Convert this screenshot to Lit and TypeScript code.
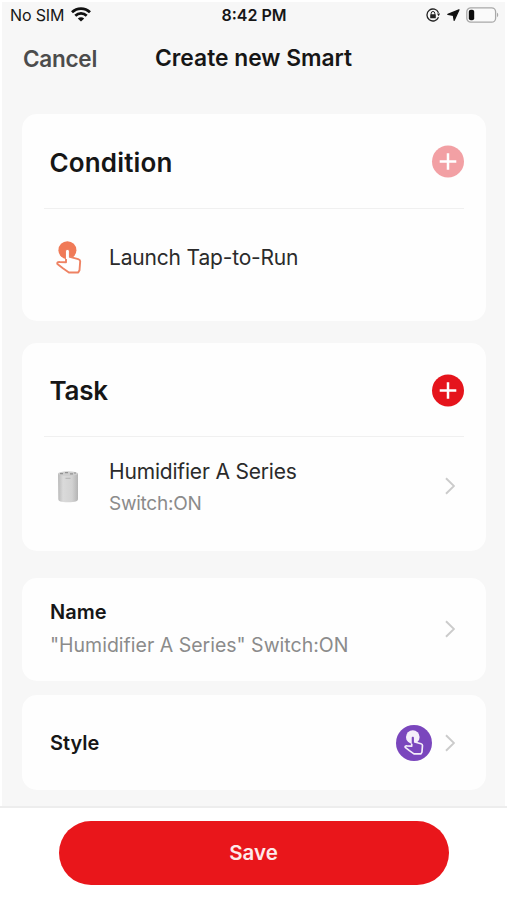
import { LitElement, html, css } from "lit";
import { customElement, property } from "lit/decorators.js";

@customElement("touch-icon")
class TouchIcon extends LitElement {
  @property() dot = "#f07a57";
  @property() line = "#ee8263";
  @property() fill = "#ffffff";
  @property() weight = "1.9";
  static styles = css`
    :host { display: block; }
    svg { display: block; width: 100%; height: 100%; }
  `;
  render() {
    return html`<svg viewBox="0 0 26 33">
      <circle cx="11.4" cy="9.2" r="9" fill=${this.dot} />
      <path
        d="M10 21.3V10.2c0-1.9 2.900-1.900 2.900 0v5.400l9.300 2.500c1.300.4 2 1.100 2 2.200l-.7 8.900-1.300 2.300h-9.300l-6-4.200L1.400 22.900c-.5-1.500.7-2.100 2.200-1.900z"
        fill=${this.fill} stroke=${this.line} stroke-width=${this.weight} stroke-linejoin="round" />
      <path d="M10 18V10.300c0-1.900 2.900-1.900 2.900 0V18z" fill=${this.fill} />
    </svg>`;
  }
}

@customElement("app-root")
class AppRoot extends LitElement {
  static styles = css`
    :host {
      display: block;
      width: 507px;
      height: 900px;
      overflow: hidden;
      background: #fff;
      color: #161616;
      font-family: Inter, "Liberation Sans", sans-serif;
      white-space: nowrap;
    }
    * { box-sizing: border-box; }
    svg { display: block; flex: none; }
    .screen { height: 808px; padding: 2px 2px 0; overflow: hidden; border-bottom: 2px solid #ededed; }
    .page { height: 804px; background: #f7f7f7; padding: 0 19px 0 20px; }
    .status {
      display: grid;
      grid-template-columns: 1fr auto 1fr;
      align-items: center;
      height: 26px;
      margin: 0 -13px 0 -12px;
      font-size: 16px;
    }
    .carrier { display: flex; align-items: center; gap: 7px; margin-top: -1px; letter-spacing: -0.15px; }
    .time { font-weight: 600; padding: 0 1px 1px 0; }
    .indicators { display: flex; justify-content: flex-end; align-items: center; gap: 7px; margin-top: -1px; }
    .battery { margin-left: -1px; }
    .nav { display: flex; align-items: center; height: 60px; margin-bottom: 26px; font-weight: 600; }
    .cancel { width: 133px; padding-left: 1px; font-size: 22.500px; letter-spacing: -0.25px; color: #4c4c4c; }
    .title { padding-bottom: 2px; font-size: 22.800px; }
    .card { background: #fefefe; border-radius: 15px; padding: 0 22px; }
    .condition { height: 207px; margin-bottom: 22px; }
    .task { height: 208px; margin-bottom: 27px; }
    .head {
      display: flex;
      align-items: center;
      justify-content: space-between;
      height: 95px;
      padding: 1px 0 0 6px;
      border-bottom: 1.500px solid #f0f0f0;
      font-size: 26px;
      font-weight: 600;
    }
    .head span { padding-top: 2px; margin-left: -0.5px; letter-spacing: 0.15px; }
    .task .head { height: 94px; }
    .task .head span { padding-top: 0; letter-spacing: -0.25px; }
    .item { display: flex; align-items: center; height: 98px; padding-left: 12px; }
    .tap { width: 26px; height: 33px; margin: -2px 27px 0 0; }
    .device { margin: 2px 29px 0 1px; }
    .grow { flex: 1; }
    .label { font-size: 21px; line-height: 32px; letter-spacing: -0.18px; color: #2b2b2b; }
    .item .grow { padding-top: 4px; }
    .sub { font-size: 19px; line-height: 32px; letter-spacing: -0.25px; color: #8b8b8b; }
    .row { display: flex; align-items: center; padding: 0 31px 0 28px; }
    .item .chevron { margin: 0 9px 0 0; }
    .name { height: 103px; margin-bottom: 14px; }
    .name .grow { padding-bottom: 2px; }
    .name .chevron { margin-bottom: 1px; }
    .name .strong { line-height: 33px; }
    .summary { font-size: 19.500px; letter-spacing: 0; }
    .style { height: 95px; margin-bottom: 14px; }
    .strong { font-size: 20px; line-height: 32px; font-weight: 600; }
    .badge {
      display: flex;
      align-items: center;
      justify-content: center;
      width: 36px;
      height: 36px;
      margin-right: 13px;
      border-radius: 50%;
      background: #7a46bd;
    }
    .badge touch-icon { width: 20px; height: 25px; }
    .footer { display: flex; justify-content: center; padding-top: 13px; }
    .save {
      width: 390px;
      height: 64px;
      padding: 0 0 2px;
      border: 0;
      border-radius: 32px;
      background: #e9161b;
      color: #fdeaea;
      font: 600 20.500px Inter, "Liberation Sans", sans-serif;
    }
  `;

  plus(color: string) {
    return html`<svg width="33" height="33" viewBox="0 0 33 33">
      <circle cx="17" cy="16.5" r="16" fill=${color} />
      <path d="M17 8.2v16.6M8.7 16.5h16.6" stroke="#fff" stroke-width="2.5" />
    </svg>`;
  }

  chevron() {
    return html`<svg class="chevron" width="10" height="18" viewBox="0 0 10 18">
      <path d="M1 1.2L9 9l-8 7.8" fill="none" stroke="#cbcbcb" stroke-width="1.9" />
    </svg>`;
  }

  render() {
    return html`
      <div class="screen">
        <div class="page">
          <div class="status">
            <div class="carrier">
              <span>No SIM</span>
              <svg width="20" height="15" viewBox="0 0 20 15">
                <g fill="none" stroke="#111" stroke-width="2.7">
                  <path d="M1 5.3C6 .3 14 .3 19 5.3" />
                  <path d="M4.3 8.8c3.2-3.2 8.200-3.200 11.400 0" />
                </g>
                <path d="M10 14.600L6.800 11.400c1.800-1.700 4.600-1.700 6.400 0z" fill="#111" />
              </svg>
            </div>
            <span class="time">8:42 PM</span>
            <div class="indicators">
              <svg width="14" height="14" viewBox="0 0 14 14">
                <path d="M12.500 4.700A6 6 0 1 0 12.500 9.300" fill="none" stroke="#222" stroke-width="1.300" />
                <path d="M11 5.400h3.200L12.600 8.200z" fill="#222" />
                <path d="M5.200 6.800V5.300a1.800 1.800 0 0 1 3.600 0v1.500" fill="none" stroke="#222" />
                <rect x="4.200" y="6.300" width="5.600" height="4" rx=".6" fill="#222" />
              </svg>
              <svg width="13" height="12" viewBox="0 0 13 12">
                <path d="M12 .8L7.200 11.300 6.400 6.300.9 5.400z" fill="#111" stroke="#111" stroke-width="1.300" stroke-linejoin="round" />
              </svg>
              <svg class="battery" width="33" height="16" viewBox="0 0 33 16">
                <rect x=".8" y=".8" width="28.800" height="14.400" rx="4" fill="#fafafa" stroke="#a8a8a8" stroke-width="1.300" />
                <rect x="2.800" y="2.800" width="5.400" height="10.400" rx="2" fill="#0c0c0c" />
                <path d="M31 5.800c1.600.5 1.600 3.900 0 4.400z" fill="#a8a8a8" />
              </svg>
            </div>
          </div>
          <div class="nav">
            <span class="cancel">Cancel</span>
            <span class="title">Create new Smart</span>
          </div>
          <section class="card condition">
            <div class="head"><span>Condition</span>${this.plus("#f2a0a4")}</div>
            <div class="item">
              <touch-icon class="tap"></touch-icon>
              <span class="label">Launch Tap-to-Run</span>
            </div>
          </section>
          <section class="card task">
            <div class="head"><span>Task</span>${this.plus("#e5141c")}</div>
            <div class="item">
              <svg class="device" width="23" height="34" viewBox="0 0 23 34">
                <defs>
                  <linearGradient id="body">
                    <stop offset="0" stop-color="#b9b9b9" />
                    <stop offset=".25" stop-color="#dadada" />
                    <stop offset=".7" stop-color="#d2d2d2" />
                    <stop offset="1" stop-color="#b4b4b4" />
                  </linearGradient>
                </defs>
                <path d="M1 3.500h20v25.500c0 2.200-2.500 3.200-9.900 3.200S1.300 31.200 1.300 29z" fill="url(#body)" />
                <ellipse cx="11" cy="3.600" rx="10" ry="2.300" fill="#cecece" />
                <path d="M3 3.600h3m2-1h3m2 1.200h3m1-.8h2" stroke="#929292" stroke-width="1.200" />
                <path d="M8.500 8.300h5" stroke="#b2b2b2" />
              </svg>
              <div class="grow">
                <div class="label">Humidifier A Series</div>
                <div class="sub">Switch:ON</div>
              </div>
              ${this.chevron()}
            </div>
          </section>
          <section class="card row name">
            <div class="grow">
              <div class="strong">Name</div>
              <div class="sub summary">"Humidifier A Series" Switch:ON</div>
            </div>
            ${this.chevron()}
          </section>
          <section class="card row style">
            <div class="grow strong">Style</div>
            <div class="badge">
              <touch-icon dot="#f4eefa" line="#f4eefa" fill="#7a46bd" weight="2.200"></touch-icon>
            </div>
            ${this.chevron()}
          </section>
          <section class="card"></section>
        </div>
      </div>
      <div class="footer"><button class="save">Save</button></div>
    `;
  }
}
